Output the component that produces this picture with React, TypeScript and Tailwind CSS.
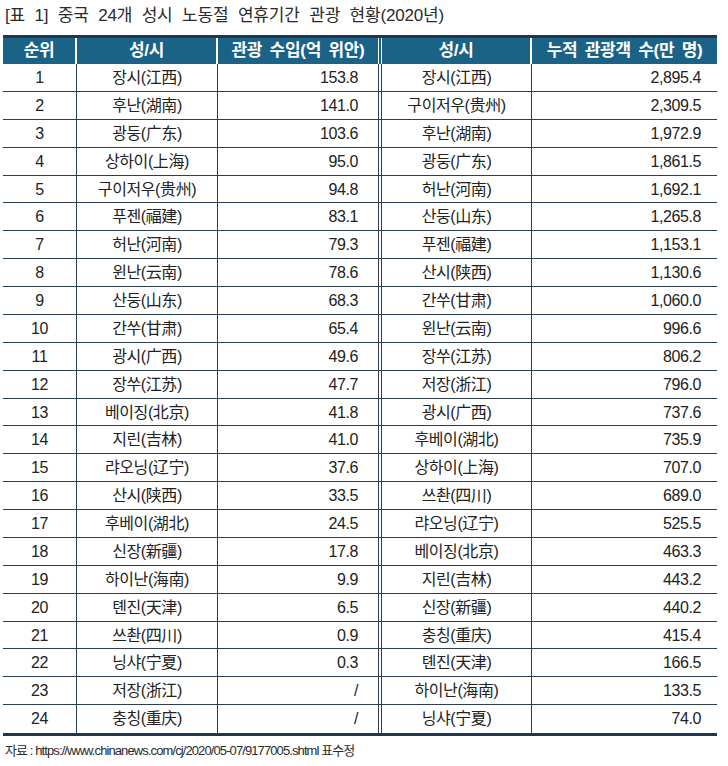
import React from "react";

const left: [string, string, string][] = [
  ["1", "장시(江西)", "153.8"],
  ["2", "후난(湖南)", "141.0"],
  ["3", "광둥(广东)", "103.6"],
  ["4", "상하이(上海)", "95.0"],
  ["5", "구이저우(贵州)", "94.8"],
  ["6", "푸젠(福建)", "83.1"],
  ["7", "허난(河南)", "79.3"],
  ["8", "윈난(云南)", "78.6"],
  ["9", "산둥(山东)", "68.3"],
  ["10", "간쑤(甘肃)", "65.4"],
  ["11", "광시(广西)", "49.6"],
  ["12", "장쑤(江苏)", "47.7"],
  ["13", "베이징(北京)", "41.8"],
  ["14", "지린(吉林)", "41.0"],
  ["15", "랴오닝(辽宁)", "37.6"],
  ["16", "산시(陕西)", "33.5"],
  ["17", "후베이(湖北)", "24.5"],
  ["18", "신장(新疆)", "17.8"],
  ["19", "하이난(海南)", "9.9"],
  ["20", "톈진(天津)", "6.5"],
  ["21", "쓰촨(四川)", "0.9"],
  ["22", "닝샤(宁夏)", "0.3"],
  ["23", "저장(浙江)", "/"],
  ["24", "충칭(重庆)", "/"],
];

const right: [string, string][] = [
  ["장시(江西)", "2,895.4"],
  ["구이저우(贵州)", "2,309.5"],
  ["후난(湖南)", "1,972.9"],
  ["광둥(广东)", "1,861.5"],
  ["허난(河南)", "1,692.1"],
  ["산둥(山东)", "1,265.8"],
  ["푸젠(福建)", "1,153.1"],
  ["산시(陕西)", "1,130.6"],
  ["간쑤(甘肃)", "1,060.0"],
  ["윈난(云南)", "996.6"],
  ["장쑤(江苏)", "806.2"],
  ["저장(浙江)", "796.0"],
  ["광시(广西)", "737.6"],
  ["후베이(湖北)", "735.9"],
  ["상하이(上海)", "707.0"],
  ["쓰촨(四川)", "689.0"],
  ["랴오닝(辽宁)", "525.5"],
  ["베이징(北京)", "463.3"],
  ["지린(吉林)", "443.2"],
  ["신장(新疆)", "440.2"],
  ["충칭(重庆)", "415.4"],
  ["톈진(天津)", "166.5"],
  ["하이난(海南)", "133.5"],
  ["닝샤(宁夏)", "74.0"],
];

export default function App() {
  return (
    <div
      className="w-[728px] h-[766px] bg-white text-[#222]"
      style={{ fontFamily: '"Liberation Sans", "Noto Sans CJK KR", sans-serif' }}
    >
      <div className="h-[35px] pl-[5px] pt-[5px] text-[17px] leading-[22px] tracking-[-0.2px] [word-spacing:5px] text-[#2a2a2a]">
        [표 1] 중국 24개 성시 노동절 연휴기간 관광 현황(2020년)
      </div>
      <div className="ml-[3px] w-[714px] border-t-[3px] border-b-[3px] border-[#1f3550]">
        <div className="flex h-[26px] bg-[#1b6287] text-white font-bold text-[17px] leading-[26px] tracking-[-0.3px] [word-spacing:3px]">
          <div className="w-[74px] text-center border-r-2 border-white">순위</div>
          <div className="w-[141px] text-center border-r-2 border-white">성/시</div>
          <div className="w-[164px] text-center border-r-4 border-double border-white">관광 수입(억 위안)</div>
          <div className="w-[150px] text-center border-r-2 border-white">성/시</div>
          <div className="flex-1 text-center">누적 관광객 수(만 명)</div>
        </div>
        {left.map((l, i) => (
          <div
            key={i}
            className={`flex h-[27.875px] text-[16px] leading-[27px] tracking-[-0.4px] ${
              i < 23 ? "border-b border-[#2a3d55]" : ""
            }`}
          >
            <div className="w-[74px] text-center border-r border-[#2a3d55]">{l[0]}</div>
            <div className="w-[141px] text-center border-r border-[#2a3d55]">{l[1]}</div>
            <div className="w-[164px] text-right pr-[20px] border-r-4 border-double border-[#2a3d55]">{l[2]}</div>
            <div className="w-[150px] text-center border-r border-[#2a3d55]">{right[i][0]}</div>
            <div className="flex-1 text-right pr-[16px]">{right[i][1]}</div>
          </div>
        ))}
      </div>
      <div className="pl-[5px] pt-[6px] text-[13px] leading-[18px] tracking-[-0.9px] text-[#2a2a2a]">
        자료 : https://www.chinanews.com/cj/2020/05-07/9177005.shtml 표수정
      </div>
    </div>
  );
}
